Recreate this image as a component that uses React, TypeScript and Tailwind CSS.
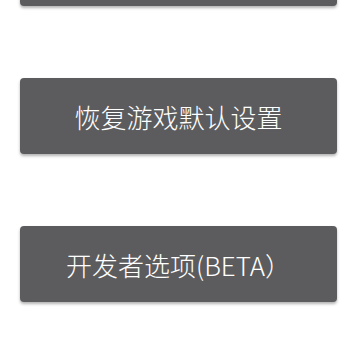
export default function App() {
  const items = ["", "恢复游戏默认设置", "开发者选项(BETA）"];
  return (
    <div className="w-[360px] h-[360px] overflow-hidden bg-white">
      <div className="flex flex-col gap-[72px] mt-[-70px] pl-5">
        {items.map((label, i) => (
          <button
            key={i}
            className="w-[317px] h-[76px] rounded bg-[#5c5c5e] text-white text-[26px] font-light font-['Noto_Sans_CJK_SC','Noto_Sans',sans-serif] shadow-[0_2px_3px_rgba(0,0,0,0.3)] flex items-center justify-center"
          >
            {label}
          </button>
        ))}
      </div>
    </div>
  );
}
